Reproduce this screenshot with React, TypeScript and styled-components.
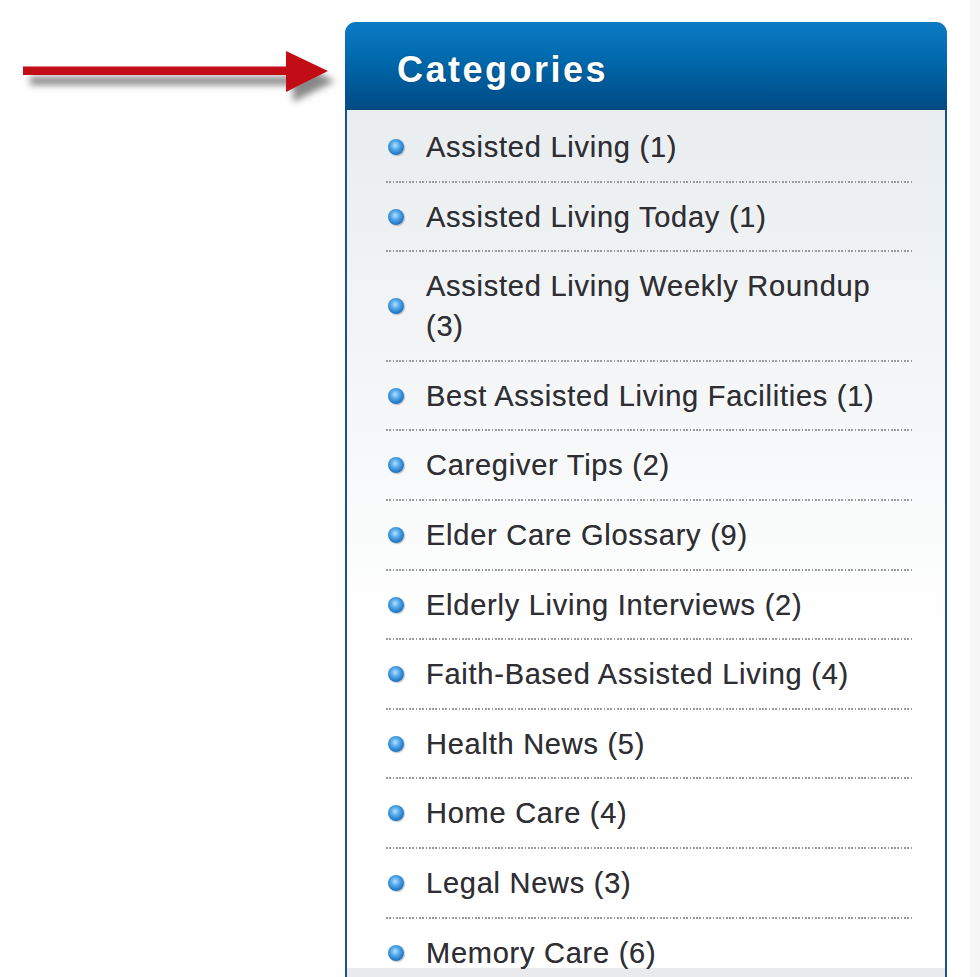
import React from "react";
import styled, { createGlobalStyle } from "styled-components";

const GlobalStyle = createGlobalStyle`
  html, body {
    margin: 0;
    padding: 0;
    background: #ffffff;
    overflow: hidden;
    height: 977px;
  }
  body {
    font-family: "Liberation Sans", Arial, sans-serif;
  }
`;

const Page = styled.div`
  display: flex;
  align-items: flex-start;
  height: 977px;
  padding-top: 22px;
  box-sizing: border-box;
  overflow: hidden;
`;

const ArrowCol = styled.div`
  width: 345px;
  flex: none;
  display: flex;
  padding-top: 26px;
`;

const ArrowSvg = styled.svg`
  display: block;
  margin-left: 18px;
`;

const Panel = styled.div`
  width: 602px;
  flex: none;
  display: flex;
  flex-direction: column;
`;

const Header = styled.div`
  height: 88px;
  box-sizing: border-box;
  border-radius: 11px 11px 0 0;
  background: linear-gradient(to bottom, #0c7bc6 0%, #0068ab 45%, #00528e 85%, #004c85 100%);
  padding: 8px 0 0 52px;
  border-bottom: 1px solid #0a4678;
`;

const Title = styled.h2`
  margin: 0;
  font-family: "Liberation Sans", Arial, sans-serif;
  font-weight: bold;
  font-size: 36px;
  line-height: 79px;
  letter-spacing: 2.5px;
  color: #ffffff;
  text-shadow: 0 0 2px rgba(0, 30, 70, 0.45);
`;

const Body = styled.ul`
  list-style: none;
  margin: 0;
  padding: 3px 32px 0 39px;
  border-left: 2px solid #1c5288;
  border-right: 2px solid #1c5288;
  background: linear-gradient(to bottom, #eaedef 0px, #f3f5f6 250px, #ffffff 520px);
  height: 1000px;
`;

const Item = styled.li<{ $last?: boolean }>`
  display: flex;
  align-items: center;
  padding: 14px 0 15.6px ${(p) => (p.$last ? "41px" : "2px")};
  margin: ${(p) => (p.$last ? "0 -32px 0 -39px" : "0")};
  background-image: ${(p) =>
    p.$last
      ? "linear-gradient(to bottom, transparent 49px, #e8eaec 49px)"
      : "repeating-linear-gradient(to right, #999b9d 0 1.7px, transparent 1.7px 3.3px)"};
  background-repeat: no-repeat;
  background-position: left bottom;
  background-size: ${(p) => (p.$last ? "100% 100%" : "100% 2px")};
`;

const Bullet = styled.span`
  flex: none;
  width: 16px;
  height: 16px;
  border-radius: 50%;
  background: radial-gradient(circle at 45% 40%, #b3e0ff 0%, #4fa6e8 35%, #1b6fc0 72%, #174f8a 100%);
  box-shadow: 1px 1px 1px rgba(80, 80, 80, 0.35);
  margin-right: 22px;
`;

const Label = styled.a`
  display: block;
  width: 470px;
  font-family: "Liberation Sans", Arial, sans-serif;
  font-size: 29px;
  line-height: 40px;
  letter-spacing: 0.75px;
  color: #2f2f33;
  text-decoration: none;
  text-shadow: 0 0 0.6px rgba(40, 40, 60, 0.6);
`;

const Strip = styled.div`
  margin-left: 23px;
  flex: 1;
  align-self: stretch;
  margin-top: -22px;
  background: #f7f7f7;
`;

const categories: string[] = [
  "Assisted Living (1)",
  "Assisted Living Today (1)",
  "Assisted Living Weekly Roundup (3)",
  "Best Assisted Living Facilities (1)",
  "Caregiver Tips (2)",
  "Elder Care Glossary (9)",
  "Elderly Living Interviews (2)",
  "Faith-Based Assisted Living (4)",
  "Health News (5)",
  "Home Care (4)",
  "Legal News (3)",
  "Memory Care (6)",
];

function Arrow() {
  return (
    <ArrowSvg width="325" height="64" viewBox="0 0 325 64">
      <defs>
        <filter id="arrowShadow" x="-10%" y="-50%" width="130%" height="250%">
          <feDropShadow dx="7" dy="10" stdDeviation="3.5" floodColor="#555555" floodOpacity="0.7" />
        </filter>
      </defs>
      <g filter="url(#arrowShadow)">
        <rect x="5" y="18.5" width="266" height="8.5" fill="#c30d12" />
        <polygon points="268,3 310,23 268,44" fill="#c30d12" />
      </g>
    </ArrowSvg>
  );
}

export default function App() {
  return (
    <>
      <GlobalStyle />
      <Page>
        <ArrowCol>
          <Arrow />
        </ArrowCol>
        <Panel>
          <Header>
            <Title>Categories</Title>
          </Header>
          <Body>
            {categories.map((c, i) => (
              <Item key={c} $last={i === categories.length - 1}>
                <Bullet />
                <Label href="#">{c}</Label>
              </Item>
            ))}
          </Body>
        </Panel>
        <Strip />
      </Page>
    </>
  );
}
